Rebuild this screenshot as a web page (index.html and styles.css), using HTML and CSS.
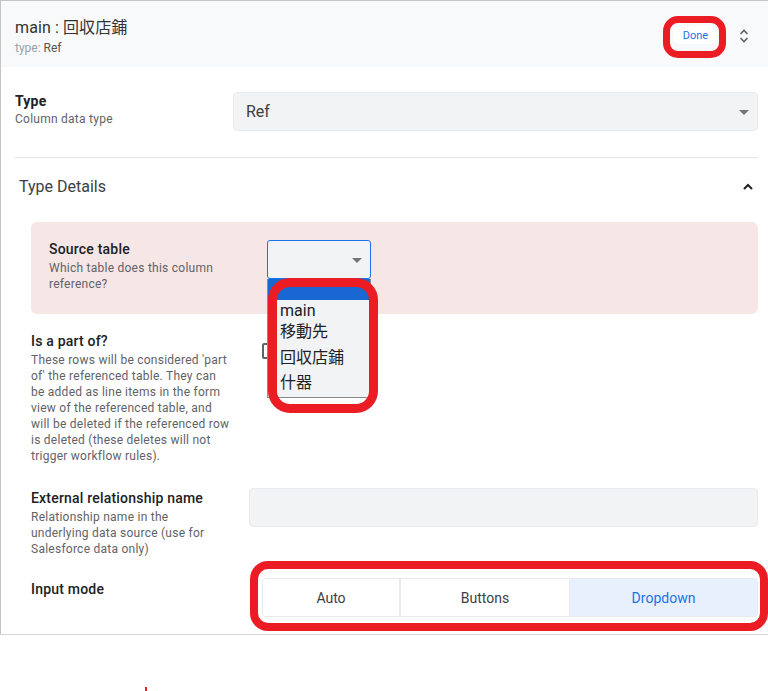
FILE: index.html
```html
<!DOCTYPE html>
<html>
<head>
<meta charset="utf-8">
<link rel="stylesheet" href="styles.css">
</head>
<body>
<div class="panel">
  <div class="header">
    <div class="titles">
      <div class="title">main : 回収店鋪</div>
      <div class="subtitle"><span class="muted">type:</span> Ref</div>
    </div>
    <div class="header-actions">
      <button class="done">Done</button>
      <svg class="updown" width="10" height="14" viewBox="0 0 10 14"><path d="M1.5 5 L5 1.5 L8.5 5 M1.5 9 L5 12.5 L8.5 9" fill="none" stroke="#5f6368" stroke-width="1.6"/></svg>
      <div class="mark mark-done"></div>
    </div>
  </div>

  <div class="body">
    <div class="row row-type">
      <div class="label lab-type">
        <div class="name">Type</div>
        <div class="desc">Column data type</div>
      </div>
      <div class="select big">
        <span>Ref</span>
        <span class="caret"></span>
      </div>
    </div>

    <div class="divider"></div>

    <div class="section-head">
      <span>Type Details</span>
      <svg width="10" height="7" viewBox="0 0 10 7"><path d="M1 6 L5 2 L9 6" fill="none" stroke="#202124" stroke-width="2"/></svg>
    </div>

    <div class="details">
      <div class="pink">
        <div class="label lab-source">
          <div class="name">Source table</div>
          <div class="desc">Which table does this column reference?</div>
        </div>
        <div class="src-wrap">
          <div class="select small focused"><span class="caret"></span></div>
          <div class="listbox">
            <div class="opt sel"></div>
            <div class="opt o1">main</div>
            <div class="opt o2">移動先</div>
            <div class="opt o3">回収店鋪</div>
            <div class="opt o4">什器</div>
          </div>
          <div class="mark mark-list"></div>
        </div>
      </div>

      <div class="row row-part">
        <div class="label lab-part">
          <div class="name">Is a part of?</div>
          <div class="desc">These rows will be considered 'part of' the referenced table. They can be added as line items in the form view of the referenced table, and will be deleted if the referenced row is deleted (these deletes will not trigger workflow rules).</div>
        </div>
        <div class="checkbox"></div>
      </div>

      <div class="row row-ext">
        <div class="label lab-ext">
          <div class="name">External relationship name</div>
          <div class="desc">Relationship name in the underlying data source (use for Salesforce data only)</div>
        </div>
        <div class="input"></div>
      </div>

      <div class="row row-mode">
        <div class="label lab-mode">
          <div class="name">Input mode</div>
        </div>
        <div class="seg-wrap">
          <div class="segmented">
            <div class="seg s-auto">Auto</div>
            <div class="seg s-buttons">Buttons</div>
            <div class="seg s-drop active">Dropdown</div>
          </div>
          <div class="mark mark-seg"></div>
        </div>
      </div>
    </div>
  </div>
</div>
<div class="below"><span class="tick"></span></div>
</body>
</html>
```

FILE: styles.css
```css
* { box-sizing: border-box; }
html, body { margin: 0; padding: 0; background: #fff; }
body {
  font-family: Roboto, "Noto Sans CJK JP", sans-serif;
  color: #202124;
  width: 768px;
  height: 691px;
  overflow: hidden;
}
.panel {
  width: 768px;
  border-left: 1px solid #c4c4c4;
  border-top: 1px solid #c4c4c4;
  border-bottom: 1px solid #d6d6d6;
  height: 635px;
}
.header {
  height: 66px;
  background: #f8f9fa;
  display: flex;
  justify-content: space-between;
  align-items: flex-start;
  padding: 16px 0 0 14px;
}
.title {
  font-size: 16px;
  line-height: 21px;
  color: #333;
  letter-spacing: 0.1px;
}
.subtitle {
  font-size: 12px;
  line-height: 15px;
  color: #555;
  margin-top: 3px;
}
.muted { color: #9aa0a6; }
.header-actions {
  position: relative;
  display: flex;
  align-items: center;
  gap: 22px;
  padding: 9px 19px 0 0;
}
.done {
  border: none;
  background: #fff;
  color: #1a73e8;
  font-family: Roboto, sans-serif;
  font-size: 11px;
  height: 18px;
  width: 43px;
  padding: 0;
  border-radius: 5px;
}
.updown { display: block; margin-top: 1px; }
.mark {
  position: absolute;
  border: 8px solid #ec1c24;
  pointer-events: none;
}
.mark-done {
  left: -11px;
  top: -1px;
  width: 63px;
  height: 42px;
  border-width: 7px;
  border-radius: 15px;
}
.body { padding: 0 10px 0 14px; }
.row { display: flex; align-items: flex-start; }
.label .name {
  font-size: 14px;
  font-weight: 500;
  line-height: 17px;
  letter-spacing: 0.2px;
  color: #202124;
}
.label .desc {
  font-size: 12px;
  line-height: 16px;
  letter-spacing: 0.25px;
  color: #5f6368;
  margin-top: 2px;
}
.row-type { padding-top: 25px; }
.lab-type { width: 218px; padding-top: 1px; }
.lab-type .name { font-weight: 700; }
.lab-type .desc { margin-top: 1px; }
.select {
  background: #f1f3f4;
  border: 1px solid #e8eaed;
  border-radius: 4px;
  display: flex;
  align-items: center;
  justify-content: space-between;
  position: relative;
}
.select.big {
  flex: 1;
  height: 39px;
  padding: 0 8px 0 12px;
  font-size: 16px;
  color: #3c4043;
}
.caret {
  width: 0; height: 0;
  border-left: 5px solid transparent;
  border-right: 5px solid transparent;
  border-top: 5px solid #757575;
  margin-top: 1px;
}
.divider {
  height: 1px;
  background: #e3e3e3;
  margin-top: 26px;
}
.section-head {
  height: 64px;
  display: flex;
  align-items: center;
  justify-content: space-between;
  padding: 0 5px 8px 4px;
  font-size: 16px;
  color: #3c4043;
}
.details { padding-left: 16px; }
.pink {
  background: #f6e6e6;
  border-radius: 6px;
  height: 92px;
  display: flex;
  align-items: flex-start;
  padding: 19px 0 0 18px;
}
.lab-source { width: 218px; }
.lab-source .desc { width: 180px; margin-top: 2px; }
.src-wrap { position: relative; }
.select.small {
  width: 104px;
  height: 39px;
  justify-content: flex-end;
  padding-right: 8px;
  margin-top: -1px;
}
.select.focused { border: 1.5px solid #1a73e8; border-radius: 3px; }
.listbox {
  position: absolute;
  left: 0;
  top: 38px;
  width: 104px;
  height: 119px;
  background: #f1f3f4;
  border: 1px solid #8a8a8a;
  border-top: none;
  z-index: 2;
  font-size: 16px;
  color: #202124;
}
.opt { padding-left: 12px; height: 24px; line-height: 24px; }
.opt.sel { background: #1967d2; height: 21px; }
.opt.o1 { height: 20px; line-height: 22px; }
.opt.o2 { height: 23px; }
.opt.o3 { height: 26px; line-height: 30px; }
.opt.o4 { height: 25px; line-height: 28px; }
.mark-list {
  left: 1px;
  top: 37px;
  width: 110px;
  height: 135px;
  border-width: 9px;
  border-radius: 22px;
  z-index: 3;
}
.row-part { padding-top: 19px; }
.lab-part { width: 231px; }
.lab-part .desc { width: 201px; margin-top: 2px; }
.checkbox {
  width: 16px;
  height: 16px;
  border: 2px solid #5f6368;
  border-radius: 2px;
  margin-top: 10px;
}
.row-ext { padding-top: 24px; }
.lab-ext { width: 218px; padding-top: 2px; }
.lab-ext .desc { width: 180px; margin-top: 2px; }
.input {
  flex: 1;
  height: 39px;
  background: #f1f3f4;
  border: 1px solid #e8eaed;
  border-radius: 4px;
}
.row-mode { padding-top: 21px; }
.lab-mode { width: 231px; padding-top: 3px; }
.seg-wrap { position: relative; flex: 1; }
.segmented {
  display: flex;
  height: 39px;
  border: 1px solid #e8eaed;
  border-radius: 4px;
  overflow: hidden;
  font-size: 14px;
  color: #3c4043;
}
.seg {
  display: flex;
  align-items: center;
  justify-content: center;
  background: #fff;
}
.s-auto { width: 138px; border-right: 2px solid #e8eaed; }
.s-buttons { width: 169px; border-right: 1px solid #e8eaed; }
.s-drop { flex: 1; }
.seg.active { background: #e8f0fe; color: #1a73e8; }
.mark-seg {
  left: -12px;
  top: -17px;
  width: 518px;
  height: 70px;
  border-width: 8px;
  border-radius: 18px;
}
.below { position: relative; height: 56px; }
.tick {
  position: absolute;
  left: 145px;
  top: 52px;
  width: 2px;
  height: 4px;
  background: #ec1c24;
}
```
